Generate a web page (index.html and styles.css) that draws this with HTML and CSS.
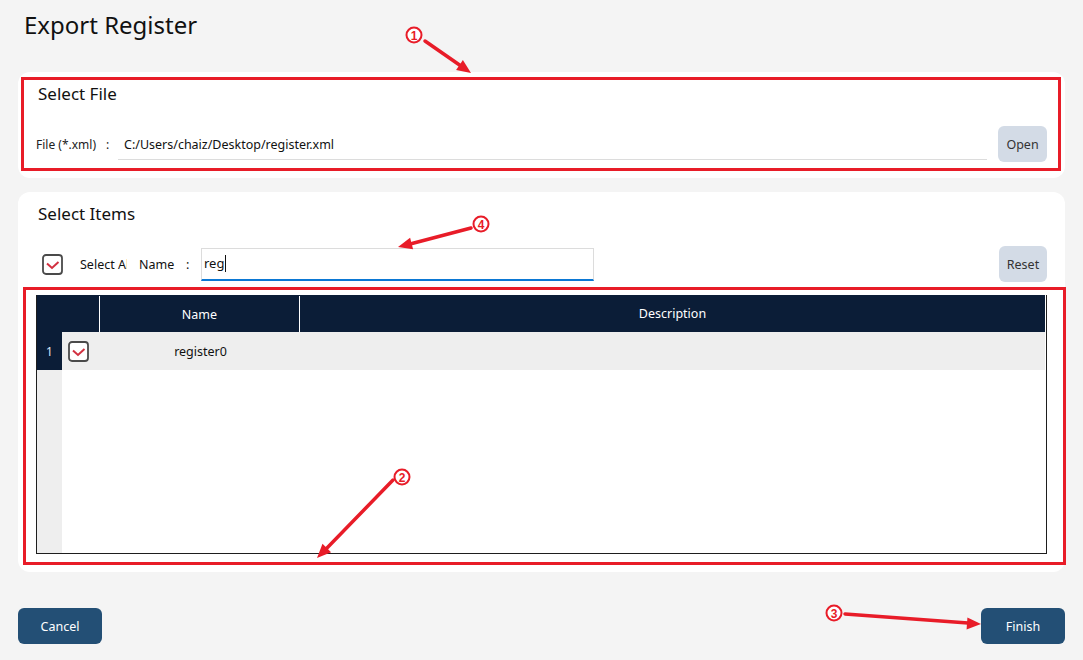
FILE: index.html
```html
<!DOCTYPE html>
<html lang="en">
<head>
<meta charset="utf-8">
<title>Export Register</title>
<link rel="stylesheet" href="styles.css">
</head>
<body>
<div class="page">
  <h1 class="title">Export Register</h1>

  <section class="card card-file">
    <h2 class="card-title">Select File</h2>
    <div class="file-row">
      <span class="label">File (*.xml)</span>
      <span class="colon">:</span>
      <div class="line-input">C:/Users/chaiz/Desktop/register.xml</div>
      <button class="btn-light">Open</button>
    </div>
  </section>

  <section class="card card-items">
    <h2 class="card-title">Select Items</h2>
    <div class="tool-row">
      <span class="check">
        <svg width="21" height="21" viewBox="0 0 21 21"><rect x="1" y="1" width="19" height="19" rx="3" fill="#fff" stroke="#4a4a4a" stroke-width="1.8"/><path d="M5 9.5 L10 14 L16.5 8" fill="none" stroke="#d23040" stroke-width="2"/></svg>
      </span>
      <span class="select-all">Select All</span>
      <span class="name-label">Name</span>
      <span class="colon2">:</span>
      <div class="search-input">reg<span class="caret"></span></div>
      <span class="spacer"></span>
      <button class="btn-light">Reset</button>
    </div>

    <div class="table">
      <div class="thead">
        <div class="th th-sel"></div>
        <div class="th th-name">Name</div>
        <div class="th th-desc">Description</div>
      </div>
      <div class="tbody">
        <div class="row">
          <div class="rownum">1</div>
          <div class="cell cell-check">
            <svg width="21" height="21" viewBox="0 0 21 21"><rect x="1" y="1" width="19" height="19" rx="3" fill="#fff" stroke="#4a4a4a" stroke-width="1.8"/><path d="M5 9.5 L10 14 L16.5 8" fill="none" stroke="#d23040" stroke-width="2"/></svg>
          </div>
          <div class="cell cell-name">register0</div>
          <div class="cell cell-desc"></div>
        </div>
        <div class="filler">
          <div class="filler-num"></div>
        </div>
      </div>
    </div>
  </section>

  <div class="footer">
    <button class="btn-dark">Cancel</button>
    <button class="btn-dark">Finish</button>
  </div>
</div>

<svg class="annotations" width="1083" height="660" viewBox="0 0 1083 660">
  <g fill="none" stroke="#e81c28" stroke-width="3">
    <rect x="22.5" y="78.5" width="1037" height="91"/>
    <rect x="24.5" y="288.5" width="1040" height="275"/>
  </g>
  <g stroke="#e81c28" stroke-width="3.5" stroke-linecap="round">
    <line x1="425" y1="41" x2="461" y2="66"/>
    <line x1="471" y1="228" x2="412" y2="243.5"/>
    <line x1="393" y1="480" x2="327" y2="548"/>
    <line x1="845" y1="614" x2="968" y2="623"/>
  </g>
  <g fill="#e81c28">
    <polygon points="471,73 456.1,69.9 462.9,60.1"/>
    <polygon points="398,247 410.1,237.7 413.1,249.3"/>
    <polygon points="317,558 322.5,543.8 331.1,552.2"/>
    <polygon points="981,624 966.6,629.5 967.4,617.5"/>
  </g>
  <g fill="#fff" stroke="#e81c28" stroke-width="2">
    <circle cx="414" cy="35" r="7.5"/>
    <circle cx="481" cy="224" r="7.5"/>
    <circle cx="402" cy="477" r="7.5"/>
    <circle cx="834" cy="613" r="7.5"/>
  </g>
  <g fill="#e81c28" font-family="'Liberation Sans', Arial, sans-serif" font-weight="bold" font-size="12" text-anchor="middle">
    <text x="414" y="39.5">1</text>
    <text x="481" y="228.5">4</text>
    <text x="402" y="481.5">2</text>
    <text x="834" y="617.5">3</text>
  </g>
</svg>
</body>
</html>
```

FILE: styles.css
```css
* { box-sizing: border-box; }

html, body {
  margin: 0;
  padding: 0;
  background: #f4f4f4;
  font-family: "Noto Sans", "Open Sans", sans-serif;
  color: #1a1a1a;
}

.page {
  position: relative;
  width: 1083px;
  height: 660px;
  padding: 0 18px;
}

.title {
  margin: 0;
  height: 72px;
  padding: 8px 0 0 6px;
  font-size: 24px;
  font-weight: 400;
  line-height: 34px;
  color: #111;
}

.card {
  background: #fff;
  border-radius: 12px;
  padding: 10px 18px 0 18px;
}

.card-file {
  height: 106px;
}

.card-items {
  margin-top: 14px;
  height: 380px;
}

.card-title {
  margin: 0;
  padding-left: 2px;
  font-size: 17px;
  font-weight: 400;
  line-height: 24px;
  color: #111;
}

.file-row {
  margin-top: 20px;
  display: flex;
  align-items: center;
  height: 36px;
  font-size: 12px;
}

.label { width: 64px; color: #222; white-space: nowrap; }
.colon { width: 18px; padding-left: 6px; color: #222; }

.line-input {
  flex: 1;
  height: 30px;
  line-height: 30px;
  padding: 0 6px;
  border-bottom: 1px solid #dcdcdc;
  margin-right: 11px;
  margin-top: 1px;
  font-size: 12.5px;
  color: #111;
}

.btn-light {
  height: 36px;
  width: 49px;
  border: none;
  border-radius: 6px;
  background: #d3dbe6;
  color: #333;
  font-family: inherit;
  font-size: 12.5px;
  padding: 0;
}

.tool-row {
  margin-top: 20px;
  display: flex;
  align-items: center;
  height: 36px;
  font-size: 12.5px;
}

.check {
  display: block;
  width: 21px;
  height: 21px;
  margin-left: 6px;
}
.check svg { display: block; }

.select-all {
  margin-left: 17px;
  width: 47px;
  overflow: hidden;
  white-space: nowrap;
  color: #111;
}

.name-label { margin-left: 12px; width: 47px; color: #111; }
.colon2 { width: 15px; color: #111; }

.search-input {
  width: 393px;
  height: 33px;
  border: 1px solid #dcdcdc;
  border-bottom: 2px solid #0b78d4;
  padding: 0 0 0 2px;
  line-height: 31px;
  font-size: 13px;
  color: #111;
  display: flex;
  align-items: center;
}

.caret {
  display: inline-block;
  width: 1px;
  height: 17px;
  background: #111;
  margin-left: 1px;
}

.spacer { flex: 1; }

.tool-row .btn-light { width: 48px; }

.table {
  margin-top: 13px;
  height: 259px;
  border: 1px solid #1e1e1e;
  border-top: none;
  display: flex;
  flex-direction: column;
  background: #fff;
}

.thead {
  display: flex;
  height: 37px;
  background: #0b1d37;
  margin-right: 1px;
  color: #fff;
  font-size: 12.5px;
}

.th {
  display: flex;
  align-items: center;
  justify-content: center;
}

.th-sel { width: 63px; border-right: 1px solid #fff; margin-top: 1px; }
.th-name { width: 200px; border-right: 1px solid #fff; margin-top: 1px; }
.th-desc { flex: 1; }

.tbody {
  flex: 1;
  display: flex;
  flex-direction: column;
  margin-right: 1px;
}

.row {
  display: flex;
  height: 38px;
  background: #eeeeee;
  font-size: 12.5px;
}

.rownum {
  width: 25px;
  background: #0b1d37;
  color: #dbe7f5;
  display: flex;
  align-items: center;
  padding-left: 9px;
  font-size: 12px;
}

.cell { display: flex; align-items: center; }
.cell-check { width: 38px; padding-left: 6px; }
.cell-check svg { display: block; }
.cell-name { width: 201px; justify-content: center; color: #111; }
.cell-desc { flex: 1; }

.filler { flex: 1; display: flex; }
.filler-num { width: 25px; background: #eeeeee; }

.footer {
  margin-top: 36px;
  display: flex;
  justify-content: space-between;
}

.btn-dark {
  width: 84px;
  height: 36px;
  border: none;
  border-radius: 6px;
  background: #234f75;
  color: #fff;
  font-family: inherit;
  font-size: 12.5px;
  padding: 0;
}

.annotations {
  position: absolute;
  left: 0;
  top: 0;
  pointer-events: none;
}
```
